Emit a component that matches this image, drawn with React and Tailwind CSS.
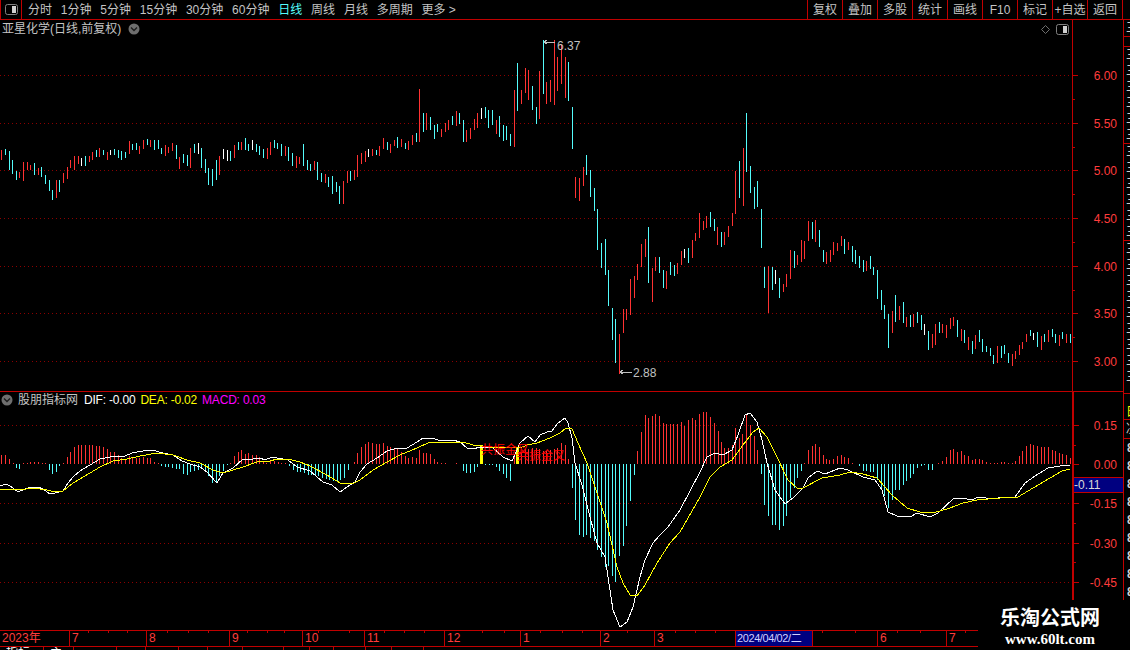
import React from 'react';

const RED = '#ff3232';
const CYAN = '#54fcfc';
const barColors = { r: RED, c: CYAN, w: '#ffffff' };

// [x, top, bottom, colour] in page pixels
const candles = [
  [1,150,160,'r'],[5,149,155,'c'],[9,151,170,'c'],[12,160,174,'c'],[16,171,180,'c'],[19,172,178,'r'],[23,162,181,'r'],[27,162,170,'r'],
  [30,165,170,'r'],[34,163,175,'c'],[38,168,175,'r'],[41,167,177,'c'],[45,175,184,'c'],[49,180,191,'c'],[52,190,200,'c'],[56,180,198,'r'],
  [59,180,192,'c'],[63,173,183,'r'],[67,167,179,'r'],[70,160,168,'r'],[74,156,170,'r'],[78,156,164,'r'],[81,158,166,'w'],[85,156,166,'c'],
  [89,156,162,'r'],[92,152,160,'r'],[96,150,157,'c'],[99,148,157,'r'],[103,150,155,'c'],[107,152,160,'r'],[110,150,155,'w'],[114,149,155,'c'],
  [118,150,158,'c'],[121,151,160,'c'],[125,152,158,'c'],[129,141,154,'r'],[132,144,150,'c'],[136,143,150,'c'],[139,146,154,'r'],[143,140,149,'r'],
  [147,139,145,'c'],[150,140,147,'r'],[154,140,150,'c'],[158,140,149,'c'],[161,148,154,'c'],[165,145,156,'r'],[168,147,153,'r'],[172,143,151,'r'],
  [176,145,159,'c'],[179,157,169,'r'],[183,154,163,'c'],[187,155,166,'c'],[190,148,168,'r'],[194,144,153,'c'],[198,143,154,'w'],[201,148,168,'c'],
  [205,159,173,'c'],[208,168,185,'c'],[212,169,186,'c'],[216,160,180,'c'],[219,156,175,'r'],[223,149,159,'w'],[227,150,161,'w'],[230,151,161,'c'],
  [234,145,158,'r'],[238,142,150,'c'],[241,142,150,'r'],[245,138,150,'c'],[248,144,151,'c'],[252,140,150,'w'],[256,144,152,'c'],[259,146,155,'c'],
  [263,149,158,'c'],[267,148,159,'r'],[270,142,155,'r'],[274,140,148,'c'],[277,143,149,'c'],[281,144,156,'c'],[285,146,156,'r'],[288,147,161,'c'],
  [292,153,166,'c'],[296,156,168,'r'],[299,157,164,'r'],[303,144,166,'c'],[307,160,170,'c'],[310,164,171,'c'],[314,161,170,'r'],[317,162,180,'c'],
  [321,173,182,'c'],[325,174,183,'r'],[328,177,187,'c'],[332,176,194,'c'],[336,182,192,'c'],[339,186,204,'c'],[343,181,204,'r'],[347,171,183,'r'],
  [350,171,181,'c'],[354,170,180,'r'],[357,155,177,'r'],[361,153,164,'r'],[365,151,162,'r'],[368,149,157,'w'],[372,149,156,'r'],[376,150,155,'c'],[379,146,156,'r'],
  [383,138,149,'r'],[387,142,150,'c'],[390,144,153,'r'],[394,140,146,'r'],[397,137,148,'c'],[401,139,147,'r'],[405,143,149,'c'],[408,141,150,'r'],
  [412,135,145,'r'],[416,133,142,'c'],[419,89,142,'r'],[423,113,132,'c'],[426,113,130,'r'],[430,117,130,'c'],[434,125,139,'c'],[437,124,132,'c'],
  [441,129,137,'r'],[445,123,132,'r'],[448,120,130,'r'],[452,116,125,'c'],[456,111,126,'r'],[459,113,124,'c'],[463,120,142,'c'],[466,130,142,'r'],
  [470,128,139,'r'],[474,119,130,'r'],[477,113,128,'r'],[481,108,119,'w'],[485,107,118,'c'],[488,110,128,'c'],[492,110,125,'c'],[496,120,134,'r'],
  [499,116,137,'c'],[503,125,141,'c'],[506,126,140,'c'],[510,134,146,'c'],[514,90,147,'r'],[517,63,111,'c'],[521,90,104,'r'],[525,68,93,'r'],
  [528,70,100,'r'],[532,86,110,'c'],[536,107,124,'c'],[539,71,119,'r'],[543,40,94,'c'],[546,82,104,'r'],[550,80,102,'r'],[554,40,105,'r'],
  [557,57,91,'r'],[561,45,84,'r'],[565,57,98,'r'],[568,62,101,'c'],[572,107,149,'c'],[575,177,198,'r'],[579,178,201,'r'],[583,167,186,'r'],
  [586,155,175,'c'],[590,170,197,'c'],[594,188,211,'c'],[597,209,250,'c'],[601,243,268,'c'],[605,239,275,'c'],[608,270,306,'c'],[612,308,340,'c'],
  [615,319,363,'c'],[619,334,374,'r'],[623,309,333,'r'],[626,309,320,'r'],[630,279,315,'r'],[634,276,298,'r'],[637,264,280,'r'],[641,244,267,'r'],
  [645,239,257,'r'],[648,227,283,'c'],[652,268,302,'r'],[655,257,271,'r'],[659,257,273,'c'],[663,270,288,'c'],[666,271,289,'r'],[670,262,275,'c'],
  [674,265,276,'c'],[677,263,274,'r'],[681,251,265,'r'],[684,249,258,'w'],[688,248,263,'c'],[692,240,258,'r'],[695,233,241,'r'],[699,213,238,'r'],
  [703,221,230,'r'],[706,216,228,'r'],[710,212,227,'c'],[714,219,231,'c'],[717,227,245,'r'],[721,232,247,'c'],[724,232,245,'r'],[728,226,237,'r'],
  [732,213,226,'r'],[735,171,214,'r'],[739,161,198,'c'],[743,148,206,'r'],[746,113,172,'c'],[750,166,193,'c'],[754,187,209,'c'],[757,181,207,'c'],
  [761,209,248,'c'],[764,267,288,'c'],[768,266,313,'r'],[772,267,290,'c'],[775,270,284,'w'],[779,278,298,'c'],[783,284,292,'r'],[786,274,287,'r'],
  [790,250,279,'r'],[794,251,268,'c'],[797,255,265,'r'],[801,240,262,'r'],[804,241,259,'r'],[808,221,241,'r'],[812,222,239,'c'],[815,220,242,'r'],
  [819,230,247,'c'],[823,250,262,'c'],[826,252,264,'r'],[830,250,262,'r'],[833,242,255,'r'],[837,243,251,'r'],[841,236,246,'r'],[844,239,254,'c'],
  [848,242,250,'r'],[852,246,262,'c'],[855,250,264,'c'],[859,256,268,'c'],[863,260,272,'c'],[866,261,271,'r'],[870,256,269,'c'],[873,267,275,'c'],
  [877,270,299,'c'],[881,290,310,'c'],[884,305,319,'c'],[888,314,348,'c'],[892,311,333,'r'],[895,295,322,'c'],[899,306,320,'r'],[903,302,323,'c'],
  [906,317,327,'r'],[910,315,327,'c'],[913,314,327,'r'],[917,312,323,'c'],[921,315,330,'c'],[924,324,335,'w'],[928,331,350,'c'],[932,334,348,'r'],
  [935,324,345,'r'],[939,322,333,'c'],[942,324,333,'r'],[946,325,338,'r'],[950,318,329,'r'],[953,317,326,'r'],[957,320,337,'c'],[961,329,341,'r'],
  [964,330,343,'c'],[968,337,350,'r'],[972,341,354,'c'],[975,335,349,'r'],[979,330,342,'c'],[982,339,352,'c'],[986,346,352,'c'],[990,348,356,'c'],
  [993,355,364,'c'],[997,346,363,'r'],[1001,346,358,'c'],[1004,345,354,'c'],[1008,353,363,'c'],[1012,354,366,'r'],[1015,351,359,'r'],[1019,345,355,'r'],
  [1022,342,349,'r'],[1026,334,342,'r'],[1030,330,336,'c'],[1033,333,340,'w'],[1037,332,347,'c'],[1041,336,350,'r'],[1044,334,342,'c'],[1048,330,342,'r'],
  [1052,329,337,'c'],[1055,334,343,'c'],[1059,335,346,'r'],[1062,332,339,'c'],[1066,334,343,'r'],[1070,334,343,'c'],
];

// [x, height]: above zero is red, below zero is cyan
const histogram = [
  [1,9],[5,9],[9,5],[13,1],[16,-4],[19,-5],[23,1],[27,1],[30,2],[34,2],[38,2],[42,1],[45,1],[49,-6],[52,-10],[56,-8],[59,-2],[63,1],[67,7],[70,12],
  [74,17],[78,19],[81,19],[85,19],[89,19],[92,19],[96,18],[99,18],[103,17],[107,15],[110,12],[114,12],[118,9],[121,6],[125,5],[129,8],[132,6],[136,6],
  [139,6],[143,7],[147,6],[150,6],[154,2],[158,1],[161,-2],[165,-3],[168,-3],[172,-4],[176,-5],[179,-5],[183,-10],[187,-11],[190,-8],[194,-7],[198,-6],
  [201,-5],[205,-8],[208,-12],[212,-19],[216,-19],[219,-12],[223,-7],[227,-1],[230,1],[234,8],[238,12],[241,14],[245,10],[248,11],[252,9],[256,9],[259,7],
  [263,3],[266,1],[270,3],[274,3],[278,2],[281,1],[285,1],[289,-2],[293,-6],[297,-8],[300,-8],[304,-9],[308,-11],[311,-11],[315,-11],[318,-12],[322,-14],
  [326,-15],[329,-16],[333,-17],[337,-17],[340,-16],[344,-14],[348,-6],[354,2],[357,11],[361,17],[365,20],[368,22],[372,21],[376,20],[379,20],[383,21],
  [387,18],[390,17],[394,15],[397,15],[401,12],[405,8],[408,6],[412,7],[416,6],[419,14],[423,11],[426,11],[430,10],[434,5],[437,2],[441,1],[445,1],[456,1],
  [463,-7],[466,-9],[470,-9],[474,-8],[477,-3],[485,-1],[489,-1],[492,-1],[496,-3],[499,-7],[503,-10],[506,-14],[510,-17],[514,7],[517,10],[521,12],[525,15],
  [528,15],[532,16],[536,16],[539,15],[543,13],[546,13],[550,14],[554,15],[557,16],[561,21],[565,19],[568,5],[572,-24],[575,-56],[579,-71],[583,-73],[586,-71],
  [590,-74],[594,-77],[597,-86],[601,-93],[605,-103],[608,-102],[612,-112],[615,-118],[619,-92],[623,-82],[626,-62],[630,-37],[634,-11],[637,13],[641,32],
  [645,49],[648,46],[652,48],[655,50],[659,48],[663,41],[666,40],[670,40],[673,40],[677,40],[681,42],[684,38],[688,44],[692,46],[695,44],[699,50],[703,52],
  [706,52],[710,47],[714,41],[718,33],[721,22],[724,16],[728,16],[732,19],[735,36],[739,26],[742,30],[746,49],[750,39],[754,28],[757,14],[761,-10],[764,-41],
  [768,-52],[772,-61],[775,-61],[779,-66],[783,-62],[786,-52],[790,-34],[794,-24],[797,-14],[801,-7],[804,1],[808,14],[812,18],[815,20],[819,17],[823,9],
  [826,5],[829,4],[833,5],[837,8],[841,9],[844,7],[848,6],[852,1],[859,-2],[863,-7],[866,-7],[870,-8],[873,-8],[877,-16],[881,-26],[884,-32],[888,-44],[892,-36],
  [895,-26],[899,-26],[903,-21],[906,-17],[910,-14],[913,-10],[917,-4],[921,-2],[924,-1],[928,-6],[932,-6],[938,1],[942,3],[946,7],[950,14],[953,15],[957,12],
  [961,13],[964,9],[968,8],[972,4],[975,5],[979,5],[982,4],[986,2],[990,1],[994,1],[997,1],[1001,2],[1004,2],[1008,1],[1012,1],[1015,3],[1019,8],[1022,13],
  [1026,18],[1030,20],[1033,19],[1037,18],[1041,17],[1044,17],[1048,17],[1052,14],[1055,13],[1059,11],[1062,10],[1066,9],[1070,6],
];

const dif = '0,486 6,484 10,486 17,491 20,491 28,488 38,487 43,489 50,494 55,493 63,491 68,483 73,477 80,471 90,465 100,459 110,457 125,456 132,453 143,451 152,450 163,453 173,455 182,461 190,464 200,467 207,472 217,483 223,473 233,468 243,459 253,459 260,458 265,460 272,457 277,458 288,460 297,467 310,471 323,482 332,485 340,492 347,487 355,482 360,472 367,464 377,458 387,451 397,448 407,448 417,442 423,438 433,438 440,441 453,440 460,442 467,448 473,449 480,447 493,448 503,457 512,461 520,443 528,436 535,442 540,435 547,432 552,431 558,423 565,418 568,423 572,438 575,463 582,485 590,517 597,543 605,557 613,610 620,627 627,622 633,607 640,577 645,560 653,543 660,535 668,527 680,510 700,472 707,457 715,453 723,455 732,450 738,435 745,415 750,413 757,422 762,440 767,463 775,490 785,504 793,498 803,488 808,478 817,471 825,474 840,468 848,470 863,477 875,480 882,490 888,512 897,516 910,517 917,513 930,517 938,513 953,499 962,498 972,500 978,497 993,499 1003,497 1015,497 1025,483 1035,476 1048,468 1060,466 1070,465';
const dea = '0,490 13,489 20,490 33,488 47,490 55,492 63,491 73,483 90,473 100,467 113,461 127,459 140,456 157,453 173,455 187,460 200,463 213,470 223,473 233,470 243,467 257,462 270,461 277,459 288,459 300,462 310,466 327,475 340,483 352,484 360,480 373,470 387,462 400,455 417,448 430,442 447,442 463,442 473,445 490,447 507,447 520,448 527,445 537,443 550,438 560,433 566,428 572,429 578,443 587,463 597,493 607,523 617,567 623,583 630,595 637,596 645,585 657,563 670,543 680,532 700,497 710,477 720,467 732,460 743,445 753,432 759,428 767,437 777,457 788,480 797,488 803,488 822,478 840,475 850,472 863,474 877,478 892,495 907,508 920,512 933,513 950,508 963,503 977,500 1000,498 1018,497 1033,488 1050,478 1062,471 1070,469';

const priceGrid = [75, 123, 170, 218, 266, 313, 361];
const priceLabels = ['6.00', '5.50', '5.00', '4.50', '4.00', '3.50', '3.00'];
const macdGrid = [425, 503, 543, 582];
const macdLabels = [[425, '0.15'], [464, '0.00'], [503, '-0.15'], [543, '-0.30'], [582, '-0.45']];

const periods = ['分时', '1分钟', '5分钟', '15分钟', '30分钟', '60分钟', '日线', '周线', '月线', '多周期', '更多 >'];
const tools = ['复权', '叠加', '多股', '统计', '画线', 'F10', '标记', '+自选', '返回'];

const timeCells = [
  ['2023年', 69], ['7', 77], ['8', 83], ['9', 73], ['10', 62], ['11', 80], ['12', 76], ['1', 80], ['2', 54], ['3', 81],
];
const timeTicks = [88, 108, 127, 167, 188, 208, 247, 267, 284, 318, 349, 384, 404, 424, 482, 504, 540, 562, 582, 627, 675, 695, 715, 822, 855, 897, 920, 965];
const tabWidths = [43, 30, 43, 29, 33, 29, 35, 41, 26, 24, 32, 26, 32, 400];

const sideRows = [
  { h: 16, text: '三' }, { h: 10, text: '', line: true }, { h: 97, text: '', line: true, repeat: 6 },
  { h: 97, text: '', line: true, repeat: 6 }, { h: 153, text: '', line: true, repeat: 9 },
];

const PanelIcon = () => (
  <svg width="13" height="11" viewBox="0 0 13 11" className="shrink-0">
    <rect x="0.5" y="0.5" width="12" height="10" rx="2" fill="none" stroke="#808080" />
    <rect x="7" y="2" width="4" height="7" fill="#d0d0d0" />
  </svg>
);

const ChevronDot = () => (
  <svg width="12" height="12" viewBox="0 0 12 12" className="shrink-0">
    <circle cx="6" cy="6" r="5.5" fill="#6e6e6e" />
    <path d="M3 4.5 L6 7.5 L9 4.5" fill="none" stroke="#1c1c1c" strokeWidth="1.4" />
  </svg>
);

const PlotSvg = ({ top, height, children }) => (
  <svg
    width="1072"
    height={height}
    viewBox={`0 ${top} 1072 ${height}`}
    shapeRendering="crispEdges"
    className="block"
  >
    {children}
  </svg>
);

const Grid = ({ rows }) =>
  rows.map((y) => (
    <line key={y} x1="0" x2="1072" y1={y + 0.5} y2={y + 0.5} stroke="#8c0000" strokeDasharray="1 3" shapeRendering="auto" />
  ));

const Axis = ({ top, height, left, width, labels, minors }) => (
  <svg width={width} height={height} viewBox={`${left} ${top} ${width} ${height}`} className="block" shapeRendering="crispEdges">
    {labels.map(([y, text]) => (
      <g key={text}>
        <line x1={left} x2={left + 5} y1={y + 0.5} y2={y + 0.5} stroke="#c00000" />
        <text x="1117" y={y + 5} textAnchor="end" fontSize="12" fill="#ff3c3c">{text}</text>
      </g>
    ))}
    {minors.map((y) => (
      <line key={y} x1={left} x2={left + 2} y1={y + 0.5} y2={y + 0.5} stroke="#c00000" />
    ))}
  </svg>
);

const App = () => {
  return (
    <div className="relative w-[1130px] h-[650px] overflow-hidden bg-black text-[12px] text-[#c4c4c4] font-['Liberation_Sans','Noto_Sans_CJK_SC',sans-serif]">
      {/* Toolbar */}
      <div className="flex h-[20px] border-b border-[#c00000]">
        <div className="flex w-[22px] items-center justify-center border-x border-[#c00000]">
          <PanelIcon />
        </div>
        <div className="flex flex-1 items-center gap-[8.8px] pl-[6px]">
          {periods.map((p) => (
            <span key={p} className={p === '日线' ? 'text-[#54fcfc]' : ''}>{p}</span>
          ))}
        </div>
        <div className="flex w-[316px] border-r border-[#c00000] mr-[7px]">
          {tools.map((t) => (
            <div key={t} className="flex flex-1 items-center justify-center border-l border-[#c00000] whitespace-nowrap">
              {t}
            </div>
          ))}
        </div>
      </div>

      <div className="flex">
        <div className="w-[1123px]">
          {/* Price pane */}
          <div className="flex border-b border-[#c00000]">
            <div className="w-[1072px]">
              <div className="flex h-[18px] items-center gap-[5px] pl-[2px]">
                <span className="mr-[2px]">亚星化学(日线,前复权)</span>
                <ChevronDot />
                <div className="ml-auto flex items-center gap-[6px] pr-[3px]">
                  <svg width="9" height="9" viewBox="0 0 9 9">
                    <path d="M4.5 0.5 L8.5 4.5 L4.5 8.5 L0.5 4.5 Z" fill="none" stroke="#707070" />
                  </svg>
                  <PanelIcon />
                </div>
              </div>
              <PlotSvg top={38} height={353}>
                <Grid rows={priceGrid} />
                {candles.map(([x, t, b, c]) => (
                  <rect key={x} x={x} y={t} width="1" height={b - t} fill={barColors[c]} />
                ))}
                <path d="M544 42 L555 43 M544 42 L547 40 M544 42 L547 44" stroke="#c0c0c0" fill="none" />
                <text x="557" y="50" fontSize="12" fill="#c0c0c0">6.37</text>
                <path d="M620 372 L632 372 M620 372 L623 370 M620 372 L623 374" stroke="#c0c0c0" fill="none" />
                <text x="633" y="377" fontSize="12" fill="#c0c0c0">2.88</text>
              </PlotSvg>
            </div>
            <div className="w-[51px] border-l border-[#c00000]">
              <Axis
                top={20}
                height={371}
                left={1073}
                width={50}
                labels={priceGrid.map((y, i) => [y, priceLabels[i]])}
                minors={[99, 147, 194, 242, 290, 337]}
              />
            </div>
          </div>

          {/* MACD pane */}
          <div className="flex">
            <div className="w-[1072px]">
              <div className="flex h-[16px] items-center gap-[5px] pl-[1px]">
                <ChevronDot />
                <span className="mr-[1px]">股朋指标网</span>
                <span className="text-white tracking-[-0.2px]">DIF: -0.00</span>
                <span className="text-[#ffff00] tracking-[-0.2px]">DEA: -0.02</span>
                <span className="text-[#ff00ff] tracking-[-0.2px]">MACD: 0.03</span>
              </div>
              <PlotSvg top={408} height={222}>
                <Grid rows={macdGrid} />
                {histogram.map(([x, h]) => (
                  <rect
                    key={x}
                    x={x}
                    y={h > 0 ? 464 - h : 464}
                    width="1"
                    height={Math.abs(h)}
                    fill={h > 0 ? RED : CYAN}
                  />
                ))}
                <rect x="480" y="445" width="3" height="19" fill="#ffff00" />
                <rect x="516" y="448" width="3" height="16" fill="#ffff00" />
                <polyline points={dif} fill="none" stroke="#ffffff" strokeWidth="1" />
                <polyline points={dea} fill="none" stroke="#ffff00" strokeWidth="1" />
                <text x="481" y="454" fontSize="12" fill="#ff0000">共振金叉</text>
                <text x="517" y="460" fontSize="12" fill="#ff0000">共振金叉</text>
              </PlotSvg>
            </div>
            <div className="relative w-[51px] border-l-2 border-[#c00000]">
              <Axis
                top={392}
                height={238}
                left={1074}
                width={49}
                labels={macdLabels}
                minors={[445, 484, 523, 562]}
              />
              <div className="absolute left-0 right-0 top-[85px] flex h-[16px] items-center border-y border-[#c00000] bg-[#000080] text-[#d8d8d8]">
                -0.11
              </div>
            </div>
          </div>
        </div>

        {/* Clipped side list */}
        <div className="w-[7px] overflow-hidden border-l border-[#c00000] text-[#d0d0d0]">
          {sideRows.map((row, i) => (
            <div
              key={i}
              style={{ height: row.h }}
              className={`overflow-hidden pl-[2px] leading-[16px] ${row.line ? 'border-t border-[#c00000]' : ''}`}
            >
              {row.text}
              {Array.from({ length: row.repeat || 0 }, (_, j) => (
                <div key={j} className="whitespace-nowrap">三</div>
              ))}
            </div>
          ))}
          <div className="h-[26px] border-t border-[#c00000] pl-[2px] pt-[11px] leading-[14px] text-[#ffff00]">日</div>
          <div className="h-[20px] border-y border-[#c00000] leading-[18px] pl-[2px]">决</div>
          {Array.from({ length: 9 }, (_, i) => (
            <div key={i} className="h-[18px] pl-[3px] leading-[18px] font-bold">8</div>
          ))}
        </div>
      </div>

      {/* Time axis */}
      <div className="absolute left-0 right-0 top-[630px]">
        <div className="relative flex h-[17px] border-y border-[#c00000] text-[#ff3c3c]">
          {timeCells.map(([label, w], i) => (
            <div
              key={label}
              style={{ width: w }}
              className={`pl-[2px] leading-[15px] ${i ? 'border-l border-[#c00000]' : ''}`}
            >
              {label}
            </div>
          ))}
          <div className="w-[78px] overflow-hidden whitespace-nowrap border-x border-[#c00000] bg-[#000080] pl-[1px] text-[11px] leading-[15px] tracking-[-0.4px] text-[#d0d0ff]">2024/04/02/二</div>
          <div className="w-[64px]" />
          <div className="w-[69px] border-l border-[#c00000] pl-[2px] leading-[15px]">6</div>
          <div className="w-[60px] border-l border-[#c00000] pl-[2px] leading-[15px]">7</div>
          <svg width="1130" height="3" viewBox="0 0 1130 3" shapeRendering="crispEdges" className="absolute left-0 top-0">
            {timeTicks.map((x) => (
              <line key={x} x1={x + 0.5} x2={x + 0.5} y1="0" y2="2" stroke="#c00000" />
            ))}
          </svg>
        </div>
        <div className="flex h-[3px] overflow-hidden text-white">
          {tabWidths.map((w, i) => (
            <div key={i} style={{ width: w }} className={`pl-[6px] leading-[13px] ${i ? 'border-l border-[#c00000]' : ''}`}>
              {i === 0 ? '指标' : i === 1 ? '主' : ''}
            </div>
          ))}
        </div>
      </div>

      {/* Watermark */}
      <div className="absolute right-0 top-[600px] flex h-[50px] w-[152px] flex-col items-center bg-black pr-[8px] pt-[6px] text-white">
        <div className="text-[20px] font-bold leading-[25px]">乐淘公式网</div>
        <div className="text-[15px] font-bold leading-[16px] font-['Liberation_Serif',serif]">www.60lt.com</div>
      </div>
    </div>
  );
};

export default App;
